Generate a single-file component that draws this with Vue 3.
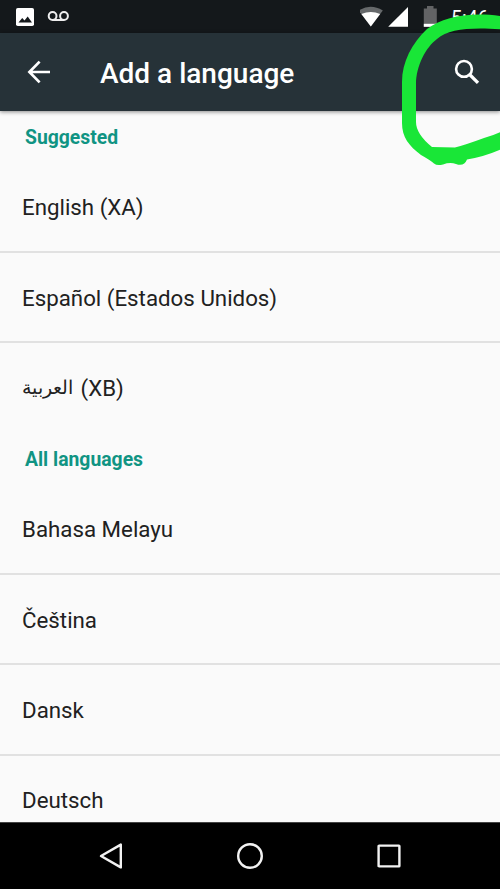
<script setup>
const sections = [
  {
    title: 'Suggested',
    languages: [
      { name: 'English (XA)' },
      { name: 'Español (Estados Unidos)' },
      { script: 'العربية', name: ' (XB)' },
    ],
  },
  {
    title: 'All languages',
    languages: [
      { name: 'Bahasa Melayu' },
      { name: 'Čeština' },
      { name: 'Dansk' },
      { name: 'Deutsch' },
    ],
  },
]
</script>

<template>
  <div class="screen">
    <header class="status">
      <svg class="status-icons" width="80" height="33" viewBox="0 0 80 33">
        <rect x="16" y="8" width="18" height="18" rx="1.8" fill="#fff" />
        <path d="M18.5 22.5l3.7-4.6 2.3 2.7 3.2-4.1 4.3 6z" fill="#14181b" />
        <g fill="none" stroke="#eee" stroke-width="2">
          <circle cx="52.6" cy="16" r="3.9" />
          <circle cx="64" cy="16" r="3.9" />
          <path d="M52.6 20H64" />
        </g>
      </svg>
      <svg class="status-icons" width="80" height="33" viewBox="360 0 80 33">
        <path d="M358.6 10.5q12-7.5 24.2 0L370.8 26.5z" fill="#66696b" />
        <path d="M361.4 14.1q9.4-4 18.8 0L370.8 26.5z" fill="#fff" />
        <path d="M408 7v19.7h-19.8z" fill="#fff" />
        <path d="M427 6h6.5v2.4h3.3v18.4h-13V8.4h3.2z" fill="#626365" />
        <path d="M423.8 23.8h13v3h-13z" fill="#fff" />
      </svg>
      <span class="time">5:46</span>
    </header>

    <div class="appbar">
      <svg class="back" width="24" height="24" viewBox="0 0 24 24">
        <path d="M12.6 1.6L2.4 12l10.2 10.4M2.6 12H23" fill="none" stroke="#fff" stroke-width="2.7" />
      </svg>
      <h1>Add a language</h1>
      <svg class="search" width="26" height="26" viewBox="0 0 26 26">
        <circle cx="10" cy="9.9" r="7.9" fill="none" stroke="#fff" stroke-width="2.6" />
        <path d="M15.6 15.5L24 23.8" fill="none" stroke="#fff" stroke-width="3.3" />
      </svg>
    </div>

    <main class="content">
      <section v-for="section in sections" :key="section.title">
        <h2>{{ section.title }}</h2>
        <ul>
          <li v-for="language in section.languages" :key="language.name">
            <span><bdi v-if="language.script" class="arabic">{{ language.script }}</bdi>{{ language.name }}</span>
          </li>
        </ul>
      </section>
    </main>

    <nav class="navbar">
      <svg width="26" height="28" viewBox="0 0 26 28">
        <path d="M22.8 2.6V25.4L3 14z" fill="none" stroke="#f2f2f2" stroke-width="2.4" stroke-linejoin="round" />
      </svg>
      <svg width="28" height="28" viewBox="0 0 28 28">
        <circle cx="14" cy="14" r="11.8" fill="none" stroke="#f2f2f2" stroke-width="2.4" />
      </svg>
      <svg width="26" height="28" viewBox="0 0 26 28">
        <rect x="2.6" y="3.6" width="20.8" height="20.8" rx=".5" fill="none" stroke="#f2f2f2" stroke-width="2.4" />
      </svg>
    </nav>

    <svg class="marker" width="500" height="180" viewBox="0 0 500 180">
      <path
        d="M510 17.5C476 11 445 15 427 29C412 43 402 62 402 82V123C402 137 409 146 421 155Q430 160 434 163.500Q437 166 443 164.500Q450 162 456 164Q464 167 467 159.500Q489 156 510 145V127Q498 134 484 138Q465 145 455 147.500Q443 147 432 147Q416 134 416 122V84C416 66 426 47 437 39C450 28 474 27 510 30z"
        fill="#19e637"
      />
    </svg>
  </div>
</template>

<style>
body {
  margin: 0;
}
</style>

<style scoped>
.screen {
  position: relative;
  display: flex;
  flex-direction: column;
  width: 500px;
  height: 889px;
  overflow: hidden;
  background: #fafafa;
  color: #212121;
  font-family: Roboto, "Noto Sans", sans-serif;
}
.status {
  display: flex;
  flex: 0 0 33px;
  min-height: 0;
  background: #14181b;
}
.status-icons:nth-child(2) {
  margin-left: 280px;
}
.time {
  margin-left: 11px;
  font-size: 19.5px;
  line-height: 37px;
  color: #fff;
}
.appbar {
  z-index: 1;
  display: flex;
  flex: 0 0 77.6px;
  align-items: center;
  background: #263238;
  box-shadow: 0 1px 4px rgba(0, 0, 0, 0.45);
}
.back {
  margin-left: 27px;
}
h1 {
  flex: 1;
  margin: 4px 0 0 49px;
  font-size: 28px;
  font-weight: 500;
  line-height: 34px;
  color: #fff;
}
.search {
  margin: 0 20.5px 0 0;
}
.content {
  flex: 1;
  min-height: 0;
  padding-top: 0.7px;
  overflow: hidden;
}
h2 {
  margin: 0;
  padding: 2px 0 0 25px;
  font-size: 19.35px;
  font-weight: 700;
  line-height: 49.4px;
  color: #109483;
}
ul {
  margin: 0;
  padding: 0;
  list-style: none;
}
li {
  display: flex;
  align-items: center;
  box-sizing: border-box;
  height: 90.25px;
  padding: 1px 0 0 22px;
  border-bottom: 2px solid #e1e1e1;
  font-size: 22.3px;
  white-space: pre;
}
li:last-child {
  border-bottom-color: transparent;
}
.arabic {
  position: relative;
  top: -2px;
  margin-right: 2px;
  font-size: 19.2px;
}
.navbar {
  display: flex;
  flex: 0 0 67px;
  align-items: center;
  justify-content: space-between;
  box-sizing: border-box;
  height: 67px;
  padding: 0 98px 1px;
  border-top: 1px solid #444;
  background: #000;
}
.marker {
  position: absolute;
  top: 0;
  left: 0;
  z-index: 2;
  pointer-events: none;
}
</style>
